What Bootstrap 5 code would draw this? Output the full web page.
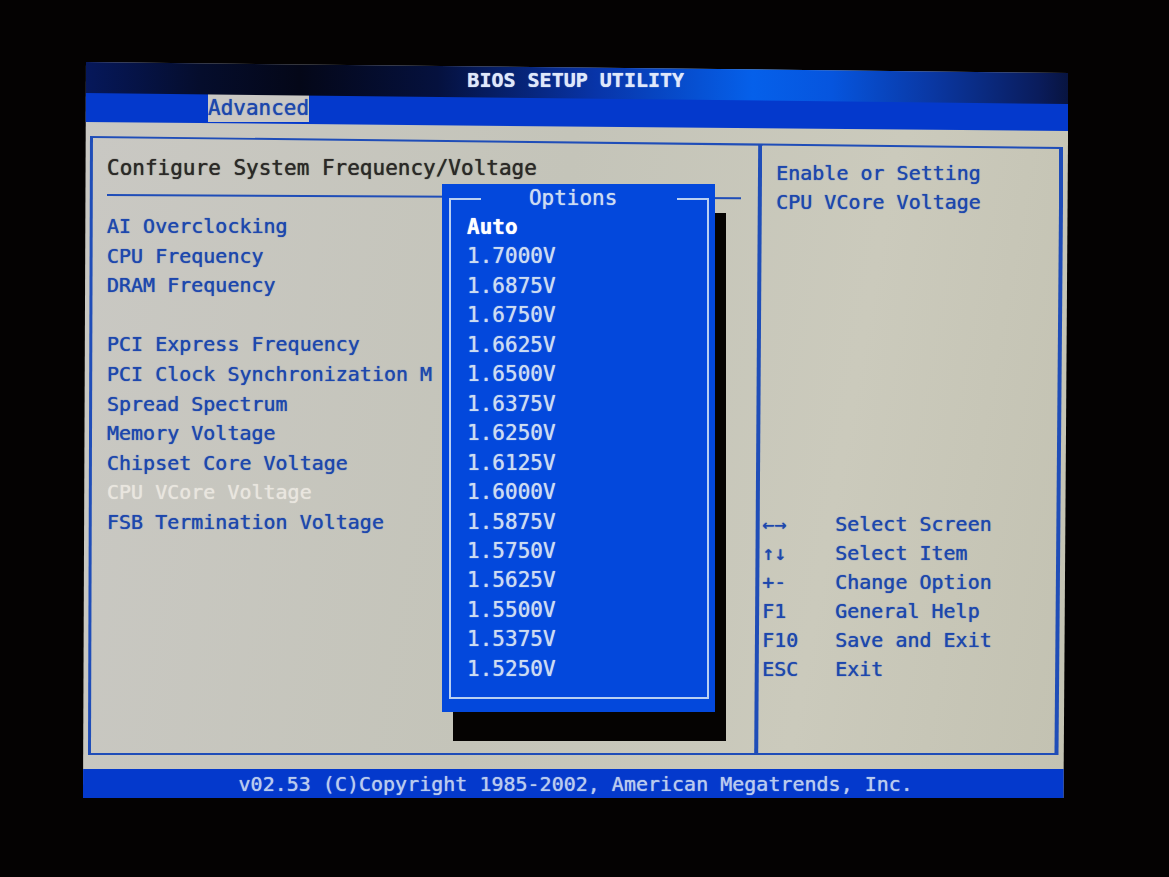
<!DOCTYPE html>
<html lang="en">
<head>
<meta charset="utf-8">
<meta name="viewport" content="width=device-width, initial-scale=1">
<title>BIOS Setup Utility</title>
<link href="https://cdn.jsdelivr.net/npm/bootstrap@5.3.0/dist/css/bootstrap.min.css" rel="stylesheet">
<style>
:root { --cream:linear-gradient(100deg,#c9c8c3,#c4c4b9 45%,#cbcabc 75%,#c3c2b2); --ink:#1d47ad; --line:#1f4db8; --bar:#0439cc; --popup:#0348dc; --pale:#ccdcf2; }
body { background:#040202; font-family:"DejaVu Sans Mono","Liberation Mono",monospace; font-size:20px; line-height:29px; color:var(--ink); text-shadow:0 0 1px currentColor; }
a, a:hover { color:inherit; text-decoration:none; }
.bezel { padding:62px 8.6% 79px 7.1%; }
.screen { background:var(--cream); clip-path:polygon(3px 0,100% 11px,calc(100% - 5px) 100%,0 100%); }
/* the bars lean down a little towards the right edge of the tube */
.title-bar, .menu-bar { position:relative; z-index:0; }
.title-bar { height:31px; color:#dfe8fa; z-index:1; }
.title-bar::before, .menu-bar::before { content:""; position:absolute; z-index:-1; inset:0 0 -11px; }
.title-bar::before { background:linear-gradient(90deg,#06185c,#050d2c 12%,#040718 22%,#05113e 36%,#0834a8 52%,#0560ea 68%,#0655de 76%,#0a38a4 86%,#0a1c5c 97%,#081440); clip-path:polygon(0 0,100% 0,100% 100%,0 31px); }
.menu-bar { height:29px; padding-left:125px; font-size:21px; }
.menu-bar::before { background:var(--bar); clip-path:polygon(0 0,100% 0,100% 38px,0 29px); }
.menu-tab { background:#cac8c4; height:28px; margin-top:1px; line-height:28px; }
.frame { position:relative; z-index:0; min-height:619px; margin:14px 5px; }
.frame::before, .frame::after { content:""; position:absolute; z-index:-1; }
.frame::before { inset:0; background:var(--line); clip-path:polygon(2px 0,100% 11px,calc(100% - 5px) 100%,0 100%); }
.frame::after { inset:2px 4px 2px 3px; background:var(--cream); clip-path:polygon(2px 0,100% 11px,calc(100% - 5px) 100%,0 100%); }
.pane-main { width:68.5%; padding:18px 15px 0 19px; line-height:29px; }
.pane-main h1 { font-size:21px; line-height:29px; color:#2b2927; }
.pane-main hr { margin:11px 0 16px; height:2px; border:0; background:var(--line); opacity:1; transform:skewY(.3deg); transform-origin:left; }
.settings { height:325px; }
.settings a { white-space:nowrap; }
.settings .current { color:#e9e6df; }
.pane-side { position:relative; padding:23px 12px 71px 20px; }
.pane-side::before { content:""; position:absolute; left:-2px; top:8px; bottom:0; width:8px; background:var(--line); clip-path:polygon(4px 0,100% 0,4px 100%,0 100%); }
.keys { grid-template-columns:73px 1fr; margin-left:-14px; }
.keys dt { font-weight:400; }
.popup { position:absolute; z-index:2; left:36.3%; top:48px; width:28%; height:528px; padding:0 6px 13px 7px; background:var(--popup); box-shadow:11px 29px #050302; font-size:21px; color:var(--pale); }
.popup fieldset { height:100%; border:2px solid #b9d0f2; padding:0 30px; }
.popup legend { float:none; width:100%; height:29px; margin:0; padding-right:12px; font-size:21px; line-height:29px; text-align:center; }
.choices { height:471px; margin-left:-14px; }
.choices button { background:none; border:0; padding:0; color:inherit; text-align:left; line-height:29px; text-shadow:inherit; }
.choices .current { color:#fff; font-weight:700; }
.foot { background:var(--bar); color:#b9cbee; height:29px; line-height:31px; }
</style>
</head>
<body>
<div class="bezel">
  <div class="screen">
    <header>
      <div class="title-bar text-center fw-bold pt-1">BIOS SETUP UTILITY</div>
      <nav class="menu-bar d-flex"><a href="#" class="menu-tab">Advanced</a></nav>
    </header>
    <main class="frame d-flex">
      <section class="pane-main">
        <h1 class="mb-0 fw-normal">Configure System Frequency/Voltage</h1>
        <hr>
        <nav class="settings d-flex flex-column justify-content-between">
          <a href="#">AI Overclocking</a>
          <a href="#">CPU Frequency</a>
          <a href="#">DRAM Frequency</a>
          <span>&nbsp;</span>
          <a href="#">PCI Express Frequency</a>
          <a href="#">PCI Clock Synchronization M</a>
          <a href="#">Spread Spectrum</a>
          <a href="#">Memory Voltage</a>
          <a href="#">Chipset Core Voltage</a>
          <a href="#" class="current">CPU VCore Voltage</a>
          <a href="#">FSB Termination Voltage</a>
        </nav>
      </section>
      <aside class="pane-side flex-fill d-flex flex-column justify-content-between">
        <p class="mb-0">Enable or Setting<br>CPU VCore Voltage</p>
        <dl class="keys d-grid mb-0">
          <dt>←→</dt><dd class="mb-0">Select Screen</dd>
          <dt>↑↓</dt><dd class="mb-0">Select Item</dd>
          <dt>+-</dt><dd class="mb-0">Change Option</dd>
          <dt>F1</dt><dd class="mb-0">General Help</dd>
          <dt>F10</dt><dd class="mb-0">Save and Exit</dd>
          <dt>ESC</dt><dd class="mb-0">Exit</dd>
        </dl>
      </aside>
      <div class="popup">
        <fieldset>
          <legend>Options</legend>
          <div class="choices d-flex flex-column justify-content-between">
            <button type="button" class="current">Auto</button>
            <button type="button">1.7000V</button>
            <button type="button">1.6875V</button>
            <button type="button">1.6750V</button>
            <button type="button">1.6625V</button>
            <button type="button">1.6500V</button>
            <button type="button">1.6375V</button>
            <button type="button">1.6250V</button>
            <button type="button">1.6125V</button>
            <button type="button">1.6000V</button>
            <button type="button">1.5875V</button>
            <button type="button">1.5750V</button>
            <button type="button">1.5625V</button>
            <button type="button">1.5500V</button>
            <button type="button">1.5375V</button>
            <button type="button">1.5250V</button>
          </div>
        </fieldset>
      </div>
    </main>
    <footer class="foot text-center">v02.53 (C)Copyright 1985-2002, American Megatrends, Inc.</footer>
  </div>
</div>
<script src="https://cdn.jsdelivr.net/npm/bootstrap@5.3.0/dist/js/bootstrap.bundle.min.js"></script>
</body>
</html>
